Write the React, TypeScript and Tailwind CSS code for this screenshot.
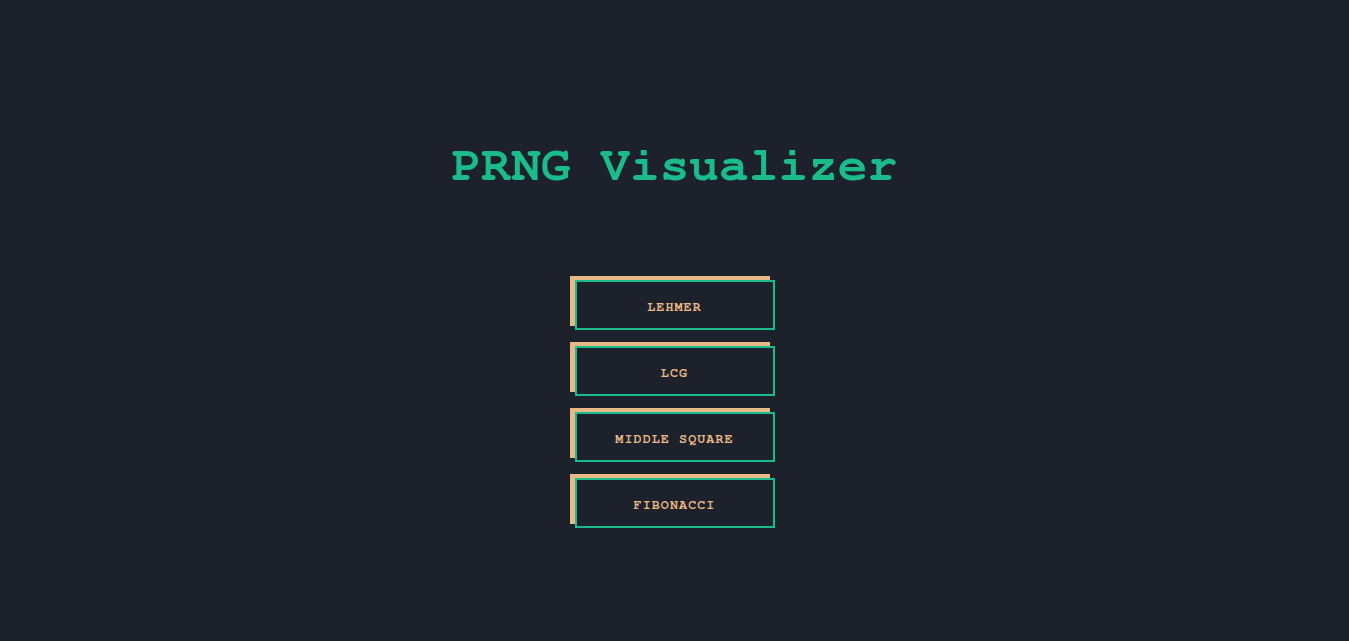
const mono = '"Nimbus Mono PS", "Nimbus Mono L", "FreeMono", "Courier 10 Pitch", "Courier", "Courier New", monospace';
export default function App() {
  const items = ["LEHMER", "LCG", "MIDDLE SQUARE", "FIBONACCI"];
  return (
    <div className="min-h-screen bg-[#1c212b] flex flex-col items-center pt-[141px]">
      <h1 className="text-[49.5px] leading-none font-bold text-[#1abc8c]" style={{ fontFamily: mono }}>
        PRNG Visualizer
      </h1>
      <div className="mt-[89.5px] flex flex-col gap-4">
        {items.map((t) => (
          <button
            key={t}
            className="w-[200px] h-[50px] pt-[5px] bg-[#1c212b] border-2 border-[#1abc8c] shadow-[-5px_-4px_0_#e8b985] text-[#e8b985] text-[13.33px] font-bold tracking-[1.1px]"
            style={{ fontFamily: mono }}
          >
            {t}
          </button>
        ))}
      </div>
    </div>
  );
}
